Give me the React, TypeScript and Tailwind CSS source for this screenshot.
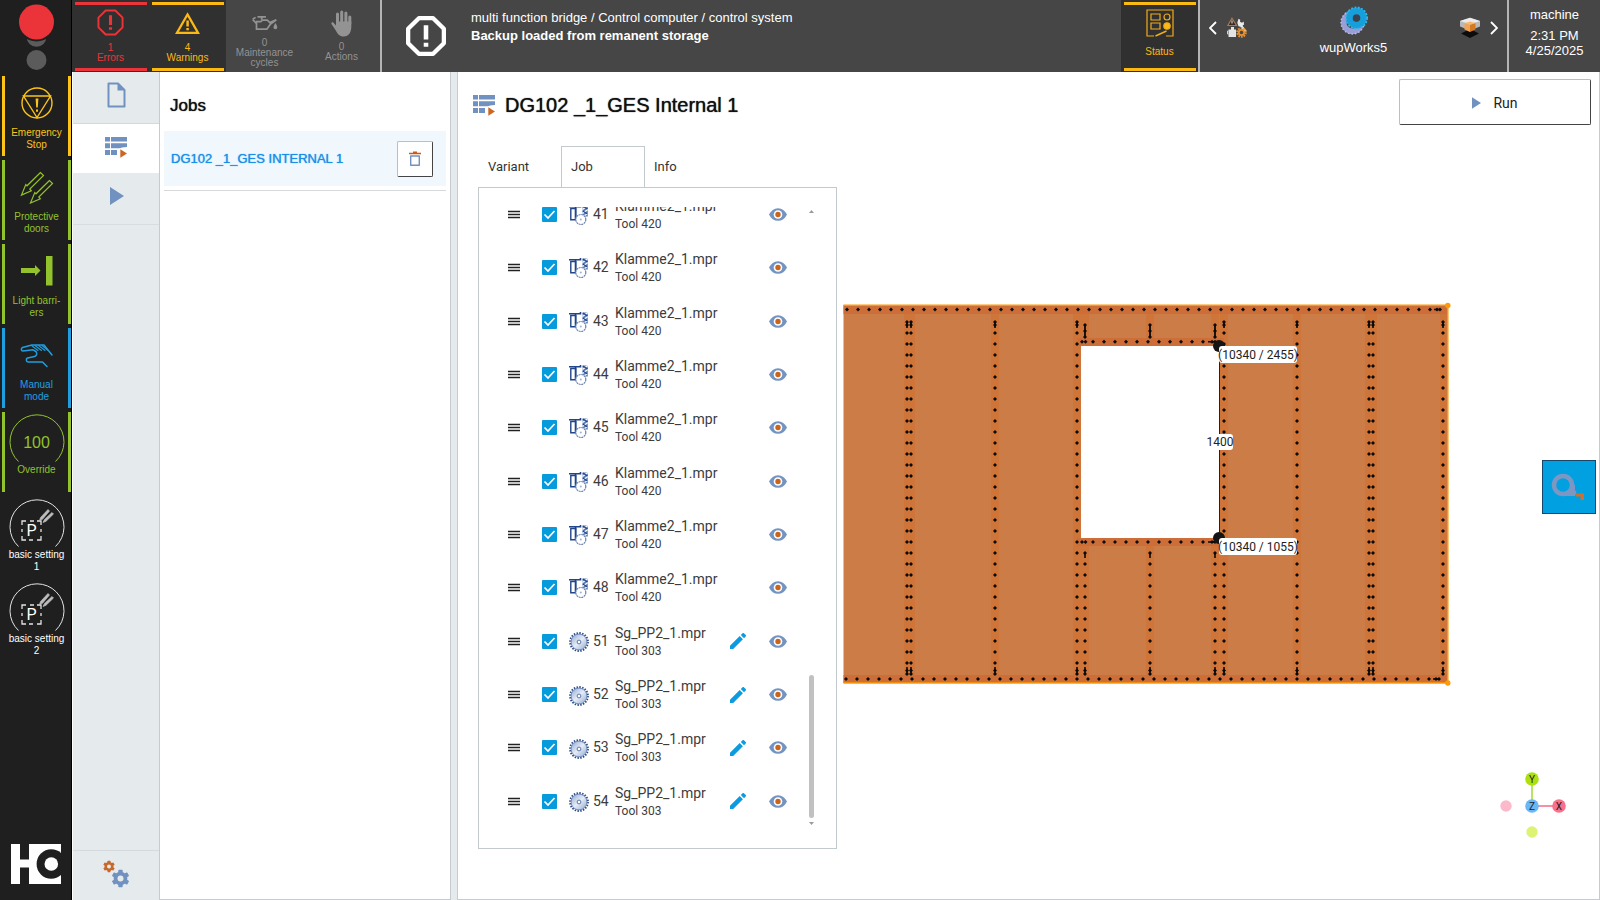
import type { ReactNode } from 'react';

const jobs = [
  ...[41, 42, 43, 44, 45, 46, 47, 48].map((n) => ({ n, name: 'Klamme2_1.mpr', tool: 'Tool 420', saw: false })),
  ...[51, 52, 53, 54].map((n) => ({ n, name: 'Sg_PP2_1.mpr', tool: 'Tool 303', saw: true })),
];

function steps(from: number, to: number, by = 11) {
  const out: number[] = [];
  for (let v = from; v <= to; v += by) out.push(v);
  return out;
}

/* ---------- icons ---------- */

function OctagonAlert({ className, w = 2 }: { className: string; w?: number }) {
  return (
    <svg viewBox="0 0 28 28" className={className} fill="none" stroke="currentColor" strokeWidth={w}>
      <path d="M9 1.5h10L26.5 9v10L19 26.5H9L1.5 19V9z" strokeLinejoin="round" />
      <path d="M12.4 6.5h3.2v10h-3.2zM12.4 18.8h3.2v2.8h-3.2z" fill="currentColor" stroke="none" />
    </svg>
  );
}

function WarningTriangle() {
  return (
    <svg viewBox="0 0 28 26" className="h-[25px] w-[27px]">
      <path d="M14 3.5 25 22.7H3z" fill="none" stroke="currentColor" strokeWidth="2.3" />
      <path d="M12.8 10h2.6v6h-2.6zM12.8 17.6h2.6v2.4h-2.6z" fill="currentColor" />
    </svg>
  );
}

function OilCan() {
  return (
    <svg viewBox="0 0 28 18" className="h-[17px] w-[28px]" fill="none" stroke="currentColor" strokeWidth="1.8">
      <path d="M5 7h4.500l2-1.500h5l2.500 2.500 7-3-6.500 5-3.500 5H5z" />
      <path d="M10.500 5V2M6 2h9" strokeWidth="2" />
      <path d="M5 9 1 5M1 4.500l3-2" />
      <path d="M25 8.500c1.600 2.500 2 3.500 2 4.500a2 2 0 0 1-4 0c0-1 .6-2 2-4.500z" fill="currentColor" stroke="none" />
    </svg>
  );
}

function Hand() {
  return (
    <svg viewBox="0 0 24 28" className="h-[28px] w-[24px]" fill="none" stroke="currentColor" strokeWidth="3" strokeLinecap="round">
      <path d="M7.500 14V5M11.700 13V3M15.900 13V4M19.800 15V8" />
      <path d="M6 12.500h15.300V18c0 5-2.500 9.500-7.500 9.500-4.500 0-6-2.500-8-6L1.500 15c-.6-1.500 1-2.200 2-1.300L6 16.500z" fill="currentColor" stroke="none" />
    </svg>
  );
}

function TrafficLight() {
  return (
    <svg viewBox="0 0 71 72" className="h-[72px] w-[71px] shrink-0" role="img" aria-label="Signal lamp">
      <circle cx="36.500" cy="37" r="9.800" fill="#5b5b5b" />
      <circle cx="36.500" cy="22" r="19.500" fill="#1f1f1f" />
      <circle cx="36.500" cy="22" r="17.500" fill="#ea3439" />
      <circle cx="36.500" cy="60" r="10" fill="#5b5b5b" />
    </svg>
  );
}

function EmergencyIcon() {
  return (
    <svg viewBox="0 0 34 34" className="h-[34px] w-[34px]" fill="none" stroke="currentColor" strokeWidth="1.4">
      <circle cx="17" cy="17" r="15" />
      <path d="M3.500 10h27L17 31.500z" />
      <path d="M15.600 12.500h2.800l-.6 9h-1.600zM16 23.500h2v2.200h-2z" fill="currentColor" stroke="none" />
    </svg>
  );
}

function DoorsIcon() {
  return (
    <svg viewBox="0 0 34 34" className="h-[34px] w-[34px]" fill="none" stroke="currentColor" strokeWidth="1.200">
      <path d="M20.500 2.500 7 15.800l-1.200-1.200L1.500 25l9.800-4.200-1.500-1.800L23.500 5.500z" />
      <path d="M29.500 10.500 16 23.800l-1.200-1.200L10.500 33l9.800-4.200-1.500-1.800L32.500 13.500z" />
    </svg>
  );
}

function BarrierIcon() {
  return (
    <svg viewBox="0 0 34 34" className="h-[34px] w-[34px]" fill="currentColor">
      <path d="M1 14h14v-3l5.500 5.500L15 22v-3H1zM26 2h6.500v29.500H26z" />
    </svg>
  );
}

function ManualIcon() {
  return (
    <svg viewBox="0 0 34 34" className="h-[34px] w-[34px]" fill="none" stroke="currentColor" strokeWidth="1.500" strokeLinejoin="round" strokeLinecap="round">
      <path d="M32 17 24 7H12L2.500 9.500C.8 10.500 1 13 3 13l10-1.200 3 1.700c1.500 2 .8 4.800-2.500 5.200L7.500 20c-1.800.6-1.500 4 .5 4h14.500l4.500 4.500" />
      <path d="M11.500 7.500l6.500 5M15 7.500l6.500 5M18.500 7.500l6.500 5M22 7.500l6 5" strokeWidth="1.100" />
    </svg>
  );
}

function Arc() {
  return (
    <svg viewBox="0 0 56 48" className="h-[48px] w-[56px]" fill="none" stroke="currentColor">
      <path d="M9.500 47.500a27 27 0 1 1 37 0" />
    </svg>
  );
}

function PresetIcon() {
  return (
    <svg viewBox="0 0 56 48" className="h-[48px] w-[56px]" fill="none" stroke="#e3e3e3">
      <path d="M9.500 47.500a27 27 0 1 1 37 0" />
      <path d="M13 26v-4h4M21 22h4M28 22h4v4M32 30v3M32 37v4h-4M24 41h-4M17 41h-4v-4M13 33v-3" strokeWidth="1.300" />
      <path d="M39 10.500 31.500 18.500l-1 3 3-1.200L40.500 12zM43 13.500 35.500 20.500l-1.500 3 3-1.200L44.500 15z" fill="#bdbdbd" stroke="#bdbdbd" strokeWidth=".7" />
      <text x="22.500" y="37" textAnchor="middle" fill="#ffffff" stroke="none" fontSize="16" fontFamily="Roboto, sans-serif">P</text>
    </svg>
  );
}

function Logo() {
  return (
    <svg viewBox="0 0 50 40" className="h-[40px] w-[50px]" role="img" aria-label="HOMAG">
      <path d="M0 0h50v40H0z" fill="#ffffff" />
      <path d="M9 0h9v15.500H9zM9 23.500h9V40H9z" fill="#1f1f1f" />
      <circle cx="40.300" cy="20" r="14.700" fill="#1f1f1f" />
      <circle cx="40.300" cy="20" r="6.800" fill="#ffffff" />
    </svg>
  );
}

function FileIcon() {
  return (
    <svg viewBox="0 0 20 26" className="h-[26px] w-[20px]">
      <path d="M2.500 1.500h9.500l6.500 6.500v16.500h-16z" fill="none" stroke="#7191c0" strokeWidth="2" strokeLinejoin="round" />
      <path d="M11.500 1 19 8.500h-7.500z" fill="#7191c0" />
    </svg>
  );
}

function JobListIcon({ className }: { className: string }) {
  return (
    <svg viewBox="0 0 22 21" className={className}>
      <path d="M0 0h5v4.500H0zM6 0h16v4.500H6zM0 6.300h5v5H0zM6 6.300h16v5H6zM0 13h5v5H0zM6 13h6v5H6z" fill="#7191c0" />
      <path d="M12 18c0-5 2-8 10-8v11H12z" fill="#ffffff" />
      <path d="M6 13h4.500v5H6z" fill="#7191c0" />
      <path d="M15.300 12.300 22 16.500l-6.700 4.300z" fill="#cc6622" />
    </svg>
  );
}

function PlayIcon({ className }: { className: string }) {
  return (
    <svg viewBox="0 0 14 18" className={className}>
      <path d="M0 0l14 9-14 9z" fill="#7191c0" />
    </svg>
  );
}

function Cog({ cx, cy, r, color }: { cx: number; cy: number; r: number; color: string }) {
  return (
    <g transform={`translate(${cx} ${cy})`}>
      {[0, 60, 120].map((a) => (
        <rect key={a} x={-r * 0.25} y={-r} width={r * 0.5} height={r * 2} rx={r * 0.08} fill={color} transform={`rotate(${a})`} />
      ))}
      <circle r={r * 0.6} fill="none" stroke={color} strokeWidth={r * 0.36} />
      <circle r={r * 0.34} fill="#e5eaed" />
    </g>
  );
}

function TrashIcon() {
  return (
    <svg viewBox="0 0 12 16" className="h-[16px] w-[12px]" fill="none">
      <path d="M0 2.500h12M4 1.200h4" stroke="#cc5a1a" strokeWidth="1.500" />
      <path d="M1.700 5h8.600v9.200H1.700z" stroke="#7191c0" strokeWidth="1.400" strokeLinejoin="round" />
    </svg>
  );
}

function StatusIcon() {
  return (
    <svg viewBox="0 0 28 28" className="h-[28px] w-[28px]" fill="none" stroke="#f0ab1a" strokeWidth="1.200">
      <path d="M8 27H1V1h26v26h-7" />
      <path d="M5 5h9v6H5zM5 14h9v6H5z" />
      <circle cx="21" cy="8" r="3" />
      <circle cx="21" cy="17" r="3.200" fill="#fdb913" />
      <path d="M9.500 27 20.500 22" strokeWidth="1.600" />
    </svg>
  );
}

function ServiceIcon() {
  return (
    <svg viewBox="0 0 20 21" className="h-[21px] w-[20px]">
      <path d="M5 1.200 9.500 8.500H.8z" fill="#3a2a22" stroke="#a87a55" strokeWidth="1.200" />
      <path d="M4.500 3.500h1v3h-1z" fill="#e5e5e5" />
      <path d="M11.500 1.800l1.700 1-.2 2 2 1 1.700-1.300.3 3-1.500 1.200 4 5-2 1.500-4-5.500-2-.5-1.200-3.500z" fill="#ececec" />
      <path d="M1.500 12.500h7.500v7.500H1.500zM4 10h3v3H4z" fill="#e4e4e4" />
      <path d="M1.500 14H.5v3h1" fill="none" stroke="#cfcfcf" />
      <circle cx="14.500" cy="15.500" r="4.300" fill="none" stroke="#e8902a" strokeWidth="2" strokeDasharray="1.700 1" />
      <circle cx="14.500" cy="15.500" r="2.700" fill="none" stroke="#e8902a" strokeWidth="1.800" />
    </svg>
  );
}

function WupIcon() {
  return (
    <svg viewBox="0 0 28 29" className="h-[29px] w-[28px]" fill="none">
      <circle cx="12.500" cy="16.500" r="8.800" stroke="#9a9ed6" strokeWidth="5.500" />
      <circle cx="12.500" cy="16.500" r="11.500" stroke="#b9bce6" strokeWidth="1.500" strokeDasharray="1.500 2" />
      <circle cx="16.500" cy="12" r="7" stroke="#159fdb" strokeWidth="7" />
      <circle cx="16.500" cy="12" r="10.600" stroke="#35b5ea" strokeWidth="1.800" strokeDasharray="1.800 1.600" />
      <circle cx="16.500" cy="12" r="3.800" fill="#39434f" />
    </svg>
  );
}

function BoxIcon() {
  return (
    <svg viewBox="0 0 20 21" className="h-[21px] w-[20px]">
      <path d="M10 12 19 16.500 10 21 1 16.500z" fill="#0c0c0c" />
      <path d="M0 4 10 .8 20 4v5.500l-10 4-10-4z" fill="#b9b9b9" />
      <path d="M0 4 10 .8 20 4 10 7.200z" fill="#ececec" />
      <path d="M4.500 6 10 7.800V15l-5.500-2.500z" fill="#f2a355" />
      <path d="M15.500 6 10 7.800V15l5.500-2.500z" fill="#d57a22" />
      <path d="M4.500 6 10 4.500 15.500 6 10 7.800z" fill="#f8b870" />
    </svg>
  );
}

function Chevron({ right = false }: { right?: boolean }) {
  return (
    <svg viewBox="0 0 8 14" className="h-[14px] w-[8px]" fill="none" stroke="#ffffff" strokeWidth="1.800">
      <path d={right ? 'M1 1l6 6-6 6' : 'M7 1 1 7l6 6'} />
    </svg>
  );
}

function DragIcon() {
  return (
    <svg viewBox="0 0 12 9" className="h-[9px] w-[12px]">
      <path d="M0 1.500h12M0 4.500h12M0 7.500h12" stroke="#222222" strokeWidth="1.700" />
    </svg>
  );
}

function ClampIcon() {
  return (
    <svg viewBox="0 0 20 21" className="h-[21px] w-[20px]" fill="none">
      <path d="M0 1.800h11.500V0" stroke="#20458a" strokeWidth="1.600" />
      <path d="M1.800 3.500h5v11.300h-5z" stroke="#20458a" strokeWidth="1.400" fill="#ffffff" />
      <path d="M6.500 2v13" stroke="#20458a" strokeWidth="1.600" />
      <path d="M13.500.5h5.300v11h-5.300z" fill="#5f7fb5" />
      <path d="M13.500 4.500 18.800.5M13.500 8.500l5.300-4M14 11.500l4.800-3" stroke="#ffffff" strokeWidth="1.200" />
      <path d="M13.800 1l4.700 3M13.800 6l4.700 3" stroke="#20458a" strokeWidth="1.200" />
      <circle cx="11.800" cy="14.500" r="5" fill="#ffffff" stroke="#6683b5" strokeWidth="1.200" strokeDasharray="2 .6" />
      <circle cx="11.800" cy="14.500" r="1" fill="#9fb2d4" />
    </svg>
  );
}

function SawIcon() {
  return (
    <svg viewBox="0 0 20 20" className="h-[20px] w-[20px]">
      <defs>
        <linearGradient id="saw" x1="0" y1="0" x2="1" y2="1">
          <stop offset="0" stopColor="#8fa8d2" />
          <stop offset=".5" stopColor="#e6ecf6" />
          <stop offset="1" stopColor="#8fa8d2" />
        </linearGradient>
      </defs>
      <circle cx="10" cy="10" r="9" fill="none" stroke="#2c4a85" strokeWidth="1.800" strokeDasharray="1.500 1.330" />
      <circle cx="10" cy="10" r="7.900" fill="url(#saw)" stroke="#5a78b0" strokeWidth=".8" />
      <circle cx="10" cy="10" r="1.900" fill="#ffffff" stroke="#4a68a0" strokeWidth=".9" />
    </svg>
  );
}

function PencilIcon() {
  return (
    <svg viewBox="0 0 16 16" className="h-[16px] w-[16px]" fill="#0c9bdf">
      <path d="M0 12.700 9.700 3l3.200 3.200L3.200 15.900H0zM10.800 2l1.800-1.700c.4-.4.900-.4 1.300 0l1.800 1.800c.4.400.4.900 0 1.300l-1.700 1.800z" />
    </svg>
  );
}

function EyeIcon() {
  return (
    <svg viewBox="0 0 18 13" className="h-[13px] w-[18px]">
      <path d="M0 6.500C2 2.500 5 .2 9 .2s7 2.300 9 6.300c-2 4-5 6.300-9 6.300S2 10.500 0 6.500z" fill="#7394c2" />
      <circle cx="9" cy="6.500" r="4.300" fill="#ffffff" />
      <circle cx="9" cy="6.500" r="2.700" fill="#c8641c" />
    </svg>
  );
}

/* ---------- header ---------- */

function Tile({ color, children }: { color: string; children: ReactNode }) {
  return (
    <button type="button" className={`flex h-full w-[77px] shrink-0 flex-col items-center px-[3px] pb-[1px] pt-[2px] text-[10px] leading-[10px] ${color}`}>
      {children}
    </button>
  );
}

function Header() {
  return (
    <header className="flex h-[72px] shrink-0 bg-[#464646] font-['Liberation_Sans',Arial,sans-serif]">
      <Tile color="bg-[#303030] text-[#ea3439]">
        <span className="h-[3px] w-[72px] shrink-0 bg-current" />
        <OctagonAlert className="mt-[4px] h-[27px] w-[27px] shrink-0" w={2} />
        <span className="mt-[7px]">1<br />Errors</span>
        <span className="mt-auto h-[3px] w-[72px] shrink-0 bg-current" />
      </Tile>
      <Tile color="bg-[#303030] text-[#fdb913]">
        <span className="h-[3px] w-[72px] shrink-0 bg-current" />
        <span className="mt-[6px]"><WarningTriangle /></span>
        <span className="mt-[7px]">4<br />Warnings</span>
        <span className="mt-auto h-[3px] w-[72px] shrink-0 bg-current" />
      </Tile>
      <Tile color="text-[#939393]">
        <span className="mt-[13px]"><OilCan /></span>
        <span className="mt-[6px]">0<br />Maintenance cycles</span>
      </Tile>
      <Tile color="text-[#939393]">
        <span className="mt-[7px]"><Hand /></span>
        <span className="mt-[5px]">0<br />Actions</span>
      </Tile>
      <div className="flex min-w-0 flex-1 items-start border-l-2 border-[#b5b5b5] pl-[24px] text-white">
        <OctagonAlert className="mt-[16px] h-[40px] w-[40px] shrink-0" w={3} />
        <p className="ml-[25px] mt-[9px] truncate text-[13px] leading-[18px]">
          multi function bridge / Control computer / control system
          <br />
          <strong className="font-bold">Backup loaded from remanent storage</strong>
        </p>
      </div>
      <Tile color="bg-[#303030] text-[#fdb913]">
        <span className="h-[3px] w-[72px] shrink-0 bg-current" />
        <span className="mt-[4px]"><StatusIcon /></span>
        <span className="mt-[10px]">Status</span>
        <span className="mt-auto h-[3px] w-[72px] shrink-0 bg-current" />
      </Tile>
      <div className="flex w-[311px] shrink-0 justify-between border-x-2 border-[#b5b5b5] px-[9px] text-white">
        <div className="flex items-start gap-[10px]">
          <button type="button" aria-label="Previous application" className="mt-[21px]"><Chevron /></button>
          <button type="button" aria-label="Service" className="mt-[17px]"><ServiceIcon /></button>
        </div>
        <button type="button" className="flex flex-col items-center pt-[6px] text-[13px] leading-[16px]">
          <WupIcon />
          <span className="mt-[5px]">wupWorks5</span>
        </button>
        <div className="flex items-start gap-[10px]">
          <button type="button" aria-label="Parts" className="mt-[17px]"><BoxIcon /></button>
          <button type="button" aria-label="Next application" className="mt-[21px]"><Chevron right /></button>
        </div>
      </div>
      <div className="w-[91px] shrink-0 pt-[7px] text-center text-[13px] leading-[15px] text-white">
        machine
        <div className="mt-[6px]">2:31 PM<br />4/25/2025</div>
      </div>
    </header>
  );
}

/* ---------- machine sidebar ---------- */

function SideItem({ color, icon, label }: { color: string; icon: ReactNode; label: ReactNode }) {
  return (
    <button type="button" className={`flex h-[80px] w-[69px] shrink-0 flex-col items-center border-x-[3px] border-current pt-[10px] ${color}`}>
      {icon}
      <span className="mt-[7px]">{label}</span>
    </button>
  );
}

function MachineBar() {
  return (
    <aside className="flex w-[72px] shrink-0 flex-col items-start border-r border-black bg-[#1f1f1f] text-[10px] leading-[12px] font-['Liberation_Sans',Arial,sans-serif]">
      <TrafficLight />
      <div className="ml-[2px] mt-[4px] flex flex-col gap-[4px]">
        <SideItem color="text-[#fcc419]" icon={<EmergencyIcon />} label={<>Emergency<br />Stop</>} />
        <SideItem color="text-[#93c32c]" icon={<DoorsIcon />} label={<>Protective<br />doors</>} />
        <SideItem color="text-[#93c32c]" icon={<BarrierIcon />} label={<>Light barri-<br />ers</>} />
        <SideItem color="text-[#1f9fe0]" icon={<ManualIcon />} label={<>Manual<br />mode</>} />
        <button type="button" className="flex h-[80px] w-[69px] flex-col items-center border-x-[3px] border-[#93c32c] pt-[2px] text-[#93c32c]">
          <span className="grid place-items-center">
            <span className="col-start-1 row-start-1"><Arc /></span>
            <span className="col-start-1 row-start-1 pt-[9px] text-[16px] leading-[18px]">100</span>
          </span>
          <span className="mt-[2px]">Override</span>
        </button>
        {[1, 2].map((n) => (
          <button type="button" key={n} className="flex h-[80px] w-[69px] flex-col items-center pt-[3px] text-white">
            <PresetIcon />
            <span className="mt-[2px]">basic setting<br />{n}</span>
          </button>
        ))}
      </div>
      <div className="mb-[16px] ml-[11px] mt-auto"><Logo /></div>
    </aside>
  );
}

/* ---------- navigation and job list ---------- */

function ViewNav() {
  return (
    <nav className="flex w-[88px] shrink-0 flex-col border-l border-r border-l-white border-r-[#c5ccd1] bg-[#e5eaed]">
      <button type="button" aria-label="Files" className="flex h-[52px] items-center justify-center border-b border-[#d3d9dd] pb-[6px]"><FileIcon /></button>
      <button type="button" aria-label="Jobs" className="flex h-[49px] items-center justify-center bg-white pb-[2px]"><JobListIcon className="h-[21px] w-[22px]" /></button>
      <button type="button" aria-label="Run view" className="flex h-[52px] items-center justify-center border-b border-[#d8dde1] pb-[5px] pl-[2px]"><PlayIcon className="h-[18px] w-[14px]" /></button>
      <button type="button" aria-label="Settings" className="mt-auto flex h-[50px] items-center justify-center border-t border-[#d3d9dd] pb-[4px]">
        <svg viewBox="0 0 26 28" className="h-[28px] w-[26px]">
          <Cog cx={6} cy={6.500} r={5.800} color="#c8692a" />
          <Cog cx={17.500} cy={18.500} r={8.800} color="#7191c0" />
        </svg>
      </button>
    </nav>
  );
}

function JobsPanel() {
  return (
    <section className="w-[291px] shrink-0 border-b border-r border-[#c5ccd1] bg-white px-[4px] font-['Liberation_Sans',Arial,sans-serif]">
      <h2 className="pl-[6px] pt-[23px] text-[17px] leading-[22px] text-[#111111] [text-shadow:0_0_1px_currentColor]">Jobs</h2>
      <div className="mt-[14px] border-b border-[#d5d9dc] pb-[4px]">
        <div className="flex h-[55px] items-center justify-between bg-[#f0f7fd] pl-[7px] pr-[13px]">
          <a href="#job" className="text-[13px] text-[#1b8fe8] [text-shadow:0_0_1px_currentColor]">DG102 _1_GES INTERNAL 1</a>
          <button type="button" aria-label="Delete job" className="flex h-[36px] w-[36px] items-center justify-center rounded-[2px] border border-b-[#444444] border-l-[#b8bfc5] border-r-[#444444] border-t-[#b8bfc5] bg-white"><TrashIcon /></button>
        </div>
      </div>
    </section>
  );
}

function StepList() {
  return (
    <div className="flex min-h-0 flex-1 border border-[#c3cacd] bg-white pb-[20px] pt-[19px]">
      <div className="flex min-h-0 flex-1 flex-col justify-end overflow-hidden">
        <ul className="grid h-[640px] shrink-0 auto-rows-fr">
          {jobs.map((job) => (
            <li key={job.n} className="flex items-center pl-[29px] text-[#3c3c3c]">
              <DragIcon />
              <label className="ml-[22px] grid place-items-center">
                <input type="checkbox" defaultChecked aria-label={`Step ${job.n}`} className="col-start-1 row-start-1 h-[15px] w-[15px] appearance-none rounded-[1px] bg-[#069bdd]" />
                <svg viewBox="0 0 15 15" className="pointer-events-none col-start-1 row-start-1 h-[15px] w-[15px]">
                  <path d="M2.500 7.500 6 11l6.500-7" fill="none" stroke="#ffffff" strokeWidth="1.700" />
                </svg>
              </label>
              <span className="ml-[12px] mt-[2px]">{job.saw ? <SawIcon /> : <ClampIcon />}</span>
              <span className="ml-[4px] w-[22px] text-[14px]">{job.n}</span>
              <span className="w-[115px] pt-[1px]">
                <span className="block text-[14px] leading-[18px]">{job.name}</span>
                <span className="block text-[12px] leading-[18px]">{job.tool}</span>
              </span>
              <span className="flex w-[39px] items-center">
                {job.saw && <button type="button" aria-label={`Edit step ${job.n}`}><PencilIcon /></button>}
              </span>
              <button type="button" aria-label={`Show step ${job.n}`}><EyeIcon /></button>
            </li>
          ))}
        </ul>
      </div>
      <div className="mr-[20px] flex w-[9px] flex-col items-center pb-[3px] pt-[3px]">
        <svg viewBox="0 0 5 3" className="h-[3px] w-[5px]"><path d="M0 3 2.500 0 5 3z" fill="#9a9a9a" /></svg>
        <span className="mt-auto h-[143px] w-[5px] rounded-full bg-[#c1c1c1]" />
        <svg viewBox="0 0 5 3" className="mt-[4px] h-[3px] w-[5px]"><path d="M0 0 2.500 3 5 0z" fill="#9a9a9a" /></svg>
      </div>
    </div>
  );
}

/* ---------- wall drawing ---------- */

const nailColumns = [907, 911, 995, 1077, 1224, 1297, 1369, 1373, 1443];
const shortColumns = [1085, 1150, 1215];

function WallDrawing() {
  const dots: [number, number][] = [];
  steps(847, 1430).forEach((x) => dots.push([x, 309.5]));
  steps(846, 1430).forEach((x) => dots.push([x, 679]));
  [1437, 1440].forEach((x) => dots.push([x, 309.5], [x - 1, 679]));
  nailColumns.forEach((x) => [322, 325, ...steps(333, 663), 670.5, 674].forEach((y) => dots.push([x, y])));
  shortColumns.forEach((x) => [325, 331, 337, 553, ...steps(564, 663), 670.5, 674].forEach((y) => dots.push([x, y])));
  [341.7, 542].forEach((y) => [1082, 1085.5, ...steps(1093, 1203), 1212, 1215].forEach((x) => dots.push([x, y])));
  return (
    <svg viewBox="843 297 609 394" className="h-[394px] w-[609px] shrink-0" role="img" aria-label="Wall element DG102">
      <path d="M843.5 305H1448V683H843.5z" fill="#cc7d47" />
      <g fill="#cf7539">
        {[[904, 11], [991, 8], [1073, 8], [1220, 8], [1293, 8], [1365, 12], [1440, 8]].map(([x, w]) => (
          <rect key={x} x={x} y="305" width={w} height="378" />
        ))}
        {[[1081, 8], [1146, 8], [1211, 8]].map(([x, w]) => (
          <g key={x}>
            <rect x={x} y="305" width={w} height="40" />
            <rect x={x} y="538" width={w} height="145" />
          </g>
        ))}
      </g>
      <path d="M843.500 305.500H1448V314H843.500zM843.500 675H1448v8H843.500zM1077 338h147v8h-147zM1077 538h147v8h-147z" fill="#cd6e38" />
      <path d="M1081 346h138.500v192H1081z" fill="#ffffff" />
      <g fill="#0a0a0a">
        {dots.map(([x, y], i) => (
          <path key={i} d={`M${x - 2} ${y}l2-2 2 2-2 2z`} />
        ))}
        {shortColumns.map((x) => (
          <rect key={x} x={x - 0.9} y="325" width="1.800" height="12" />
        ))}
        {[...nailColumns, ...shortColumns].map((x, i) => (
          <g key={x}>
            <rect x={x - 0.8} y={i < nailColumns.length ? 322 : 552} width="1.600" height="6" />
            <rect x={x - 0.8} y="667" width="1.600" height="7" />
          </g>
        ))}
        <path d="M1434 308.800h6v1.400h-6zM1433 678.300h6v1.400h-6zM1208 341h6v1.400h-6zM1208 541.300h6v1.400h-6z" />
      </g>
      <path d="M843.5 305.2H1447.800V683H843.5" fill="none" stroke="#fd9a05" strokeWidth="1.500" />
      <circle cx="1447.800" cy="305.500" r="2.700" fill="#fd9a05" />
      <circle cx="1447.800" cy="683" r="2.700" fill="#fd9a05" />
      <path d="M1219.500 346v192" stroke="#222222" />
      <circle cx="1219" cy="346" r="6" fill="#141414" />
      <circle cx="1219" cy="538" r="6" fill="#141414" />
      <rect x="1219" y="346" width="78" height="17" rx="3" fill="#ffffff" />
      <rect x="1207" y="434" width="26" height="16" rx="3" fill="#ffffff" />
      <rect x="1219" y="538" width="78" height="17" rx="3" fill="#ffffff" />
      <g fontSize="12" fill="#222222" textAnchor="middle" fontFamily="Roboto, 'Liberation Sans', sans-serif">
        <text x="1258" y="359">(10340 / 2455)</text>
        <text x="1220" y="446">1400</text>
        <text x="1258" y="551">(10340 / 1055)</text>
      </g>
    </svg>
  );
}

function AxisGizmo() {
  return (
    <svg viewBox="0 0 68 72" className="h-[72px] w-[68px]" fontSize="10" textAnchor="middle" fontFamily="Roboto, sans-serif">
      <path d="M33 36V9" stroke="#9ad91a" strokeWidth="1.400" />
      <path d="M33 36h27" stroke="#f5607e" strokeWidth="1.400" />
      <circle cx="7" cy="36" r="5.700" fill="#fbb9cb" />
      <circle cx="33" cy="62" r="5.700" fill="#dcf373" />
      <circle cx="33" cy="9" r="6.800" fill="#aee010" />
      <circle cx="33" cy="36" r="6.800" fill="#69b7f5" />
      <circle cx="60" cy="36" r="6.800" fill="#f8708c" />
      <g fill="#222222">
        <text x="33" y="12.600">Y</text>
        <text x="33" y="39.600">Z</text>
        <text x="60" y="39.600">X</text>
      </g>
    </svg>
  );
}

function TapeIcon() {
  return (
    <svg viewBox="0 0 34 28" className="h-[28px] w-[34px]">
      <circle cx="12" cy="12" r="9" fill="none" stroke="#7d96c2" strokeWidth="4.500" />
      <path d="M20 9l4 3v5l1.500 2-1.500 4H12v-3.500c5 0 7-3 8-6z" fill="#7d96c2" />
      <path d="M25 20.500h8v6.500h-3.500v-3.500H25z" fill="#d0702c" />
    </svg>
  );
}

function JobView() {
  return (
    <main className="flex min-w-0 flex-1 flex-col border-b border-l border-r border-[#c5ccd1] bg-white">
      <div className="flex h-[74px] shrink-0 items-start justify-between pl-[15px] pr-[8px]">
        <div className="flex items-center gap-[10px] pt-[20px]">
          <JobListIcon className="h-[21px] w-[22px]" />
          <h1 className="text-[20px] leading-[26px] text-[#111111] [text-shadow:0_0_1px_currentColor] font-['Liberation_Sans',Arial,sans-serif]">DG102 _1_GES Internal 1</h1>
        </div>
        <button type="button" className="mt-[7px] flex h-[46px] w-[192px] items-center justify-center gap-[12px] rounded-[2px] border border-b-[#444444] border-l-[#b8bfc5] border-r-[#444444] border-t-[#b8bfc5] bg-white pt-[2px] text-[14px] text-[#222222]">
          <PlayIcon className="h-[12px] w-[9px]" />
          Run
        </button>
      </div>
      <div className="flex min-h-0 flex-1">
        <div className="ml-[20px] flex w-[359px] shrink-0 flex-col pb-[50px]">
          <div role="tablist" className="flex h-[41px] shrink-0 text-[13px] text-[#333333]">
            <button type="button" role="tab" className="w-[83px] px-[10px] text-left">Variant</button>
            <button type="button" role="tab" aria-selected="true" className="w-[84px] border border-b-0 border-[#c3cacd] px-[9px] text-left">Job</button>
            <button type="button" role="tab" className="px-[9px] text-left">Info</button>
          </div>
          <StepList />
        </div>
        <div className="ml-[6px] flex min-w-0 flex-1 justify-between">
          <div className="pt-[151px]"><WallDrawing /></div>
          <div className="flex flex-col items-end justify-between pb-[57px] pr-[3px] pt-[314px]">
            <button type="button" aria-label="Measure" className="flex h-[54px] w-[54px] items-center justify-center border border-[#17466b] bg-[#00a0e1] pr-[2px]"><TapeIcon /></button>
            <div className="mr-[29px]"><AxisGizmo /></div>
          </div>
        </div>
      </div>
    </main>
  );
}

export default function App() {
  return (
    <div className="flex h-screen min-h-[900px] overflow-hidden bg-[#e5eaed] font-['Roboto','Liberation_Sans',sans-serif]">
      <MachineBar />
      <div className="flex min-w-0 flex-1 flex-col">
        <Header />
        <div className="flex min-h-0 flex-1">
          <ViewNav />
          <JobsPanel />
          <div className="w-[6px] shrink-0" />
          <JobView />
        </div>
      </div>
    </div>
  );
}
